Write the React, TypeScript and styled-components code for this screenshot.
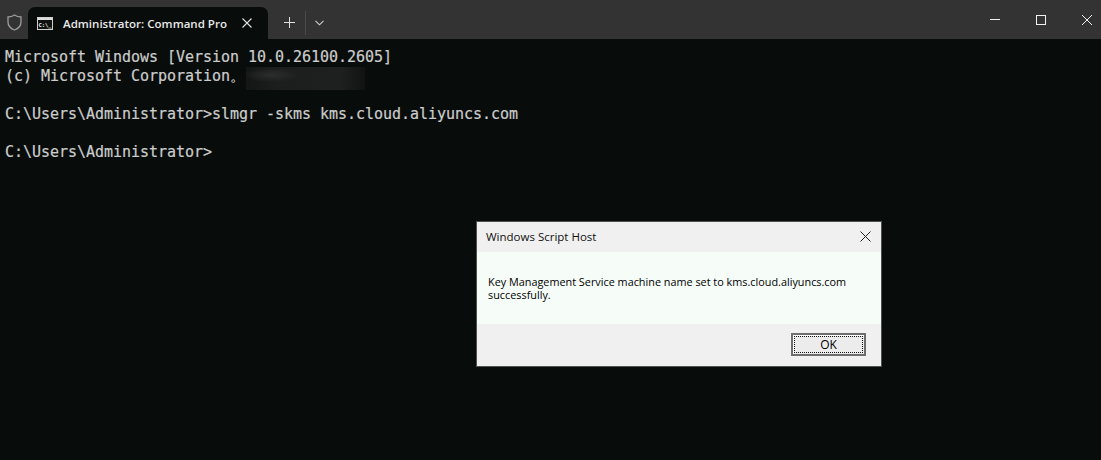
import React from "react";
import styled, { createGlobalStyle } from "styled-components";

const Global = createGlobalStyle`
  html, body { margin: 0; padding: 0; background: #080d0b; }
  #root { width: 1101px; height: 460px; overflow: hidden; }
`;

const Window = styled.div`
  position: relative;
  width: 1101px;
  height: 460px;
  display: flex;
  flex-direction: column;
  background: #080d0b;
  overflow: hidden;
`;

const TitleBar = styled.div`
  height: 39px;
  flex: none;
  background: #333333;
  display: flex;
  align-items: flex-end;
`;

const ShieldSlot = styled.div`
  width: 28px;
  height: 39px;
  display: flex;
  align-items: center;
  justify-content: center;
  padding-top: 6px;
  box-sizing: border-box;
`;

const Tab = styled.div`
  width: 240px;
  height: 32px;
  background: #080d0b;
  border-radius: 7px 7px 0 0;
  display: flex;
  align-items: center;
  box-sizing: border-box;
  padding-left: 9px;
`;

const IconLabel = styled.text`
  font: 700 5.5px "DejaVu Sans Mono", monospace;
  fill: #f0f0f0;
`;

const TabTitle = styled.span`
  font: 600 11.55px "Open Sans", "Noto Sans", sans-serif;
  color: #e8e8e8;
  margin-left: 10px;
  width: 179px;
  white-space: nowrap;
`;

const TabActions = styled.div`
  height: 39px;
  display: flex;
  align-items: center;
  padding: 6px 0 0 6px;
  box-sizing: border-box;
`;

const ActionButton = styled.div<{ $w: number }>`
  width: ${(p) => p.$w}px;
  height: 24px;
  display: flex;
  align-items: center;
  justify-content: center;
`;

const Divider = styled.div`
  width: 1px;
  height: 24px;
  background: #4a4a4a;
`;

const Spacer = styled.div`
  flex: 1;
`;

const Caption = styled.div`
  display: flex;
  height: 39px;
  align-self: flex-start;
  margin-right: -9px;
  flex: none;
`;

const CaptionButton = styled.div`
  width: 46px;
  height: 39px;
  display: flex;
  align-items: center;
  justify-content: center;
`;

const Console = styled.div`
  flex: 1;
  padding: 9px 0 0 5px;
  font: 15px/19px "DejaVu Sans Mono", "Liberation Mono", monospace;
  letter-spacing: -0.03px;
  color: #cccccc;
  -webkit-text-stroke: 0.2px #cccccc;
`;

const ConsoleLine = styled.div`
  height: 19px;
  white-space: pre;
  overflow: visible;
`;

const Redacted = styled.div`
  position: absolute;
  left: 246px;
  top: 67px;
  width: 119px;
  height: 23px;
  background:
    radial-gradient(ellipse 28px 7px at 25px 8px, #2c2d2c, transparent),
    linear-gradient(90deg, #131615, #1c1e1d 25%, #1e201f 80%, #101312);
`;

const Dialog = styled.div`
  position: absolute;
  left: 476px;
  top: 221px;
  width: 406px;
  height: 146px;
  box-sizing: border-box;
  border: 1px solid #505050;
  background: #f0f0f0;
  display: flex;
  flex-direction: column;
  font-family: "Open Sans", "Noto Sans", sans-serif;
  color: #000;
`;

const DialogHead = styled.div`
  height: 30px;
  flex: none;
  box-sizing: border-box;
  display: flex;
  align-items: center;
  justify-content: space-between;
  padding: 0 10px 2px 9px;
  font-size: 11.5px;
  color: #111;
`;

const DialogBody = styled.div`
  height: 72px;
  flex: none;
  box-sizing: border-box;
  background: #f6fcf8;
  padding: 23px 11px 0;
  font-size: 10.85px;
  line-height: 13px;
  white-space: nowrap;
`;

const DialogFoot = styled.div`
  flex: 1;
  display: flex;
  justify-content: flex-end;
  align-items: flex-start;
  padding: 9px 15px 0 0;
`;

const OkButton = styled.div`
  width: 75px;
  height: 23px;
  box-sizing: border-box;
  border: 2px solid #6e6e6e;
  background: #ececec;
  box-shadow: inset 1px 1px 0 #ffffff;
  padding: 1px;
  display: flex;
  font-size: 12px;
`;

const OkFocus = styled.div`
  flex: 1;
  border: 1px dotted #111;
  display: flex;
  align-items: center;
  justify-content: center;
`;

export default function App() {
  return (
    <Window>
      <Global />
      <TitleBar>
        <ShieldSlot>
          <svg width="15" height="17" viewBox="0 0 15 17" fill="none" stroke="#9c9c9c" strokeWidth="1.3">
            <path d="M7.5 1 C5.5 2.4 3.3 3 1 3 V8 C1 11.8 3.6 14.6 7.5 16 C11.4 14.6 14 11.8 14 8 V3 C11.7 3 9.5 2.4 7.5 1 Z" />
          </svg>
        </ShieldSlot>
        <Tab>
          <svg width="16" height="13" viewBox="0 0 16 13">
            <rect x="0.5" y="0.5" width="15" height="12" fill="#111" stroke="#d0d0d0" />
            <rect x="1" y="1" width="14" height="2" fill="#dcdcdc" />
            <IconLabel x="1.4" y="9.6">C:\_</IconLabel>
          </svg>
          <TabTitle>Administrator: Command Pro</TabTitle>
          <svg width="10" height="10" viewBox="0 0 10 10" stroke="#e0e0e0" strokeWidth="1.1">
            <path d="M0.5 0.5 L9.5 9.5 M9.5 0.5 L0.5 9.5" />
          </svg>
        </Tab>
        <TabActions>
          <ActionButton $w={31}>
            <svg width="11" height="11" viewBox="0 0 11 11" stroke="#e0e0e0" strokeWidth="1">
              <path d="M5.5 0 V11 M0 5.5 H11" />
            </svg>
          </ActionButton>
          <Divider />
          <ActionButton $w={26}>
            <svg width="9" height="6" viewBox="0 0 9 6" fill="none" stroke="#d0d0d0" strokeWidth="1.1">
              <path d="M0.5 0.8 L4.5 4.8 L8.5 0.8" />
            </svg>
          </ActionButton>
        </TabActions>
        <Spacer />
        <Caption>
          <CaptionButton>
            <svg width="10" height="1" viewBox="0 0 10 1">
              <rect width="10" height="1" fill="#f0f0f0" />
            </svg>
          </CaptionButton>
          <CaptionButton>
            <svg width="10" height="10" viewBox="0 0 10 10" fill="none" stroke="#f0f0f0">
              <rect x="0.5" y="0.5" width="9" height="9" />
            </svg>
          </CaptionButton>
          <CaptionButton>
            <svg width="10" height="10" viewBox="0 0 10 10" stroke="#f0f0f0" strokeWidth="1">
              <path d="M0 0 L10 10 M10 0 L0 10" />
            </svg>
          </CaptionButton>
        </Caption>
      </TitleBar>
      <Console>
        <ConsoleLine>Microsoft Windows [Version 10.0.26100.2605]</ConsoleLine>
        <ConsoleLine>(c) Microsoft Corporation。</ConsoleLine>
        <ConsoleLine> </ConsoleLine>
        <ConsoleLine>{"C:\\Users\\Administrator>slmgr -skms kms.cloud.aliyuncs.com"}</ConsoleLine>
        <ConsoleLine> </ConsoleLine>
        <ConsoleLine>{"C:\\Users\\Administrator>"}</ConsoleLine>
      </Console>
      <Redacted />
      <Dialog>
        <DialogHead>
          Windows Script Host
          <svg width="11" height="11" viewBox="0 0 11 11" stroke="#222" strokeWidth="1">
            <path d="M0.5 0.5 L10.5 10.5 M10.5 0.5 L0.5 10.5" />
          </svg>
        </DialogHead>
        <DialogBody>
          Key Management Service machine name set to kms.cloud.aliyuncs.com
          <br />
          successfully.
        </DialogBody>
        <DialogFoot>
          <OkButton>
            <OkFocus>OK</OkFocus>
          </OkButton>
        </DialogFoot>
      </Dialog>
    </Window>
  );
}
